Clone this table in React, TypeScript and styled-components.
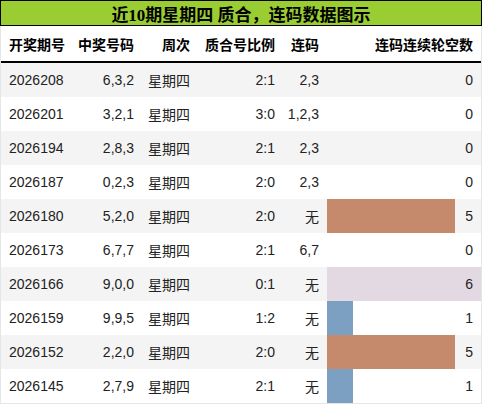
import React from "react";
import styled, { createGlobalStyle } from "styled-components";

const Global = createGlobalStyle`
  html, body { margin: 0; padding: 0; background: #fff; }
  body { font-family: "Liberation Sans", "Noto Sans CJK SC", sans-serif; }
`;

const COLS = "69px 72px 56px 85px 44px 154px";

const Wrap = styled.div`
  width: 482px;
  box-sizing: border-box;
  border-left: 1px solid #e6e6e6;
  border-right: 1px solid #e6e6e6;
  border-bottom: 1px solid #e6e6e6;
`;

const Title = styled.div`
  box-sizing: border-box;
  height: 26px;
  margin: 0 -1px;
  border: 1px solid #000;
  background: #9acd32;
  display: flex;
  align-items: center;
  justify-content: center;
  font-family: "Liberation Serif", "Noto Sans CJK SC", serif;
  font-weight: bold;
  font-size: 17px;
  color: #000;
`;

const HeadRow = styled.div`
  display: grid;
  grid-template-columns: ${COLS};
  height: 35px;
  border-bottom: 2px solid #000;
  background: #fff;
`;

const HeadCell = styled.div<{ $left?: boolean }>`
  display: flex;
  align-items: center;
  justify-content: ${(p) => (p.$left ? "flex-start" : "flex-end")};
  padding: 0 8px;
  font-family: "Noto Sans CJK SC", sans-serif;
  font-weight: bold;
  font-size: 14px;
  color: #000;
  white-space: nowrap;
`;

const Row = styled.div<{ $shade: boolean }>`
  display: grid;
  grid-template-columns: ${COLS};
  height: 34px;
  background: ${(p) => (p.$shade ? "#f4f4f4" : "#fff")};
`;

const Cell = styled.div<{ $left?: boolean }>`
  display: flex;
  align-items: center;
  justify-content: ${(p) => (p.$left ? "flex-start" : "flex-end")};
  padding: 0 8px;
  font-size: 14px;
  color: #222;
  white-space: nowrap;
`;

const Cjk = styled.span`
  font-family: "Noto Sans CJK SC", sans-serif;
`;

const BarCell = styled.div`
  position: relative;
  display: flex;
  align-items: center;
  justify-content: flex-end;
  padding: 0 8px;
  font-size: 14px;
  color: #222;
`;

const Bar = styled.div<{ $color: string }>`
  position: absolute;
  left: 0;
  top: 0;
  bottom: 0;
  background: ${(p) => p.$color};
`;

const Num = styled.span`
  position: relative;
`;

const barColor: Record<number, string> = {
  1: "#7ba0c2",
  5: "#c58a6c",
  6: "#e3d9e3",
};

const rows = [
  ["2026208", "6,3,2", "2:1", "2,3", 0],
  ["2026201", "3,2,1", "3:0", "1,2,3", 0],
  ["2026194", "2,8,3", "2:1", "2,3", 0],
  ["2026187", "0,2,3", "2:0", "2,3", 0],
  ["2026180", "5,2,0", "2:0", "无", 5],
  ["2026173", "6,7,7", "2:1", "6,7", 0],
  ["2026166", "9,0,0", "0:1", "无", 6],
  ["2026159", "9,9,5", "1:2", "无", 1],
  ["2026152", "2,2,0", "2:0", "无", 5],
  ["2026145", "2,7,9", "2:1", "无", 1],
] as const;

export default function App() {
  return (
    <>
      <Global />
      <Wrap>
        <Title>近10期星期四 质合，连码数据图示</Title>
        <HeadRow>
          <HeadCell $left>开奖期号</HeadCell>
          <HeadCell>中奖号码</HeadCell>
          <HeadCell>周次</HeadCell>
          <HeadCell>质合号比例</HeadCell>
          <HeadCell>连码</HeadCell>
          <HeadCell>连码连续轮空数</HeadCell>
        </HeadRow>
        {rows.map((r, i) => {
          const n = r[4] as number;
          return (
            <Row key={r[0]} $shade={i % 2 === 0}>
              <Cell $left>{r[0]}</Cell>
              <Cell>{r[1]}</Cell>
              <Cell>
                <Cjk>星期四</Cjk>
              </Cell>
              <Cell>{r[2]}</Cell>
              <Cell>{r[3] === "无" ? <Cjk>无</Cjk> : r[3]}</Cell>
              <BarCell>
                {n > 0 && (
                  <Bar
                    $color={barColor[n] || "#7ba0c2"}
                    style={{ width: `${(n / 6) * 100}%` }}
                  />
                )}
                <Num>{n}</Num>
              </BarCell>
            </Row>
          );
        })}
      </Wrap>
    </>
  );
}
